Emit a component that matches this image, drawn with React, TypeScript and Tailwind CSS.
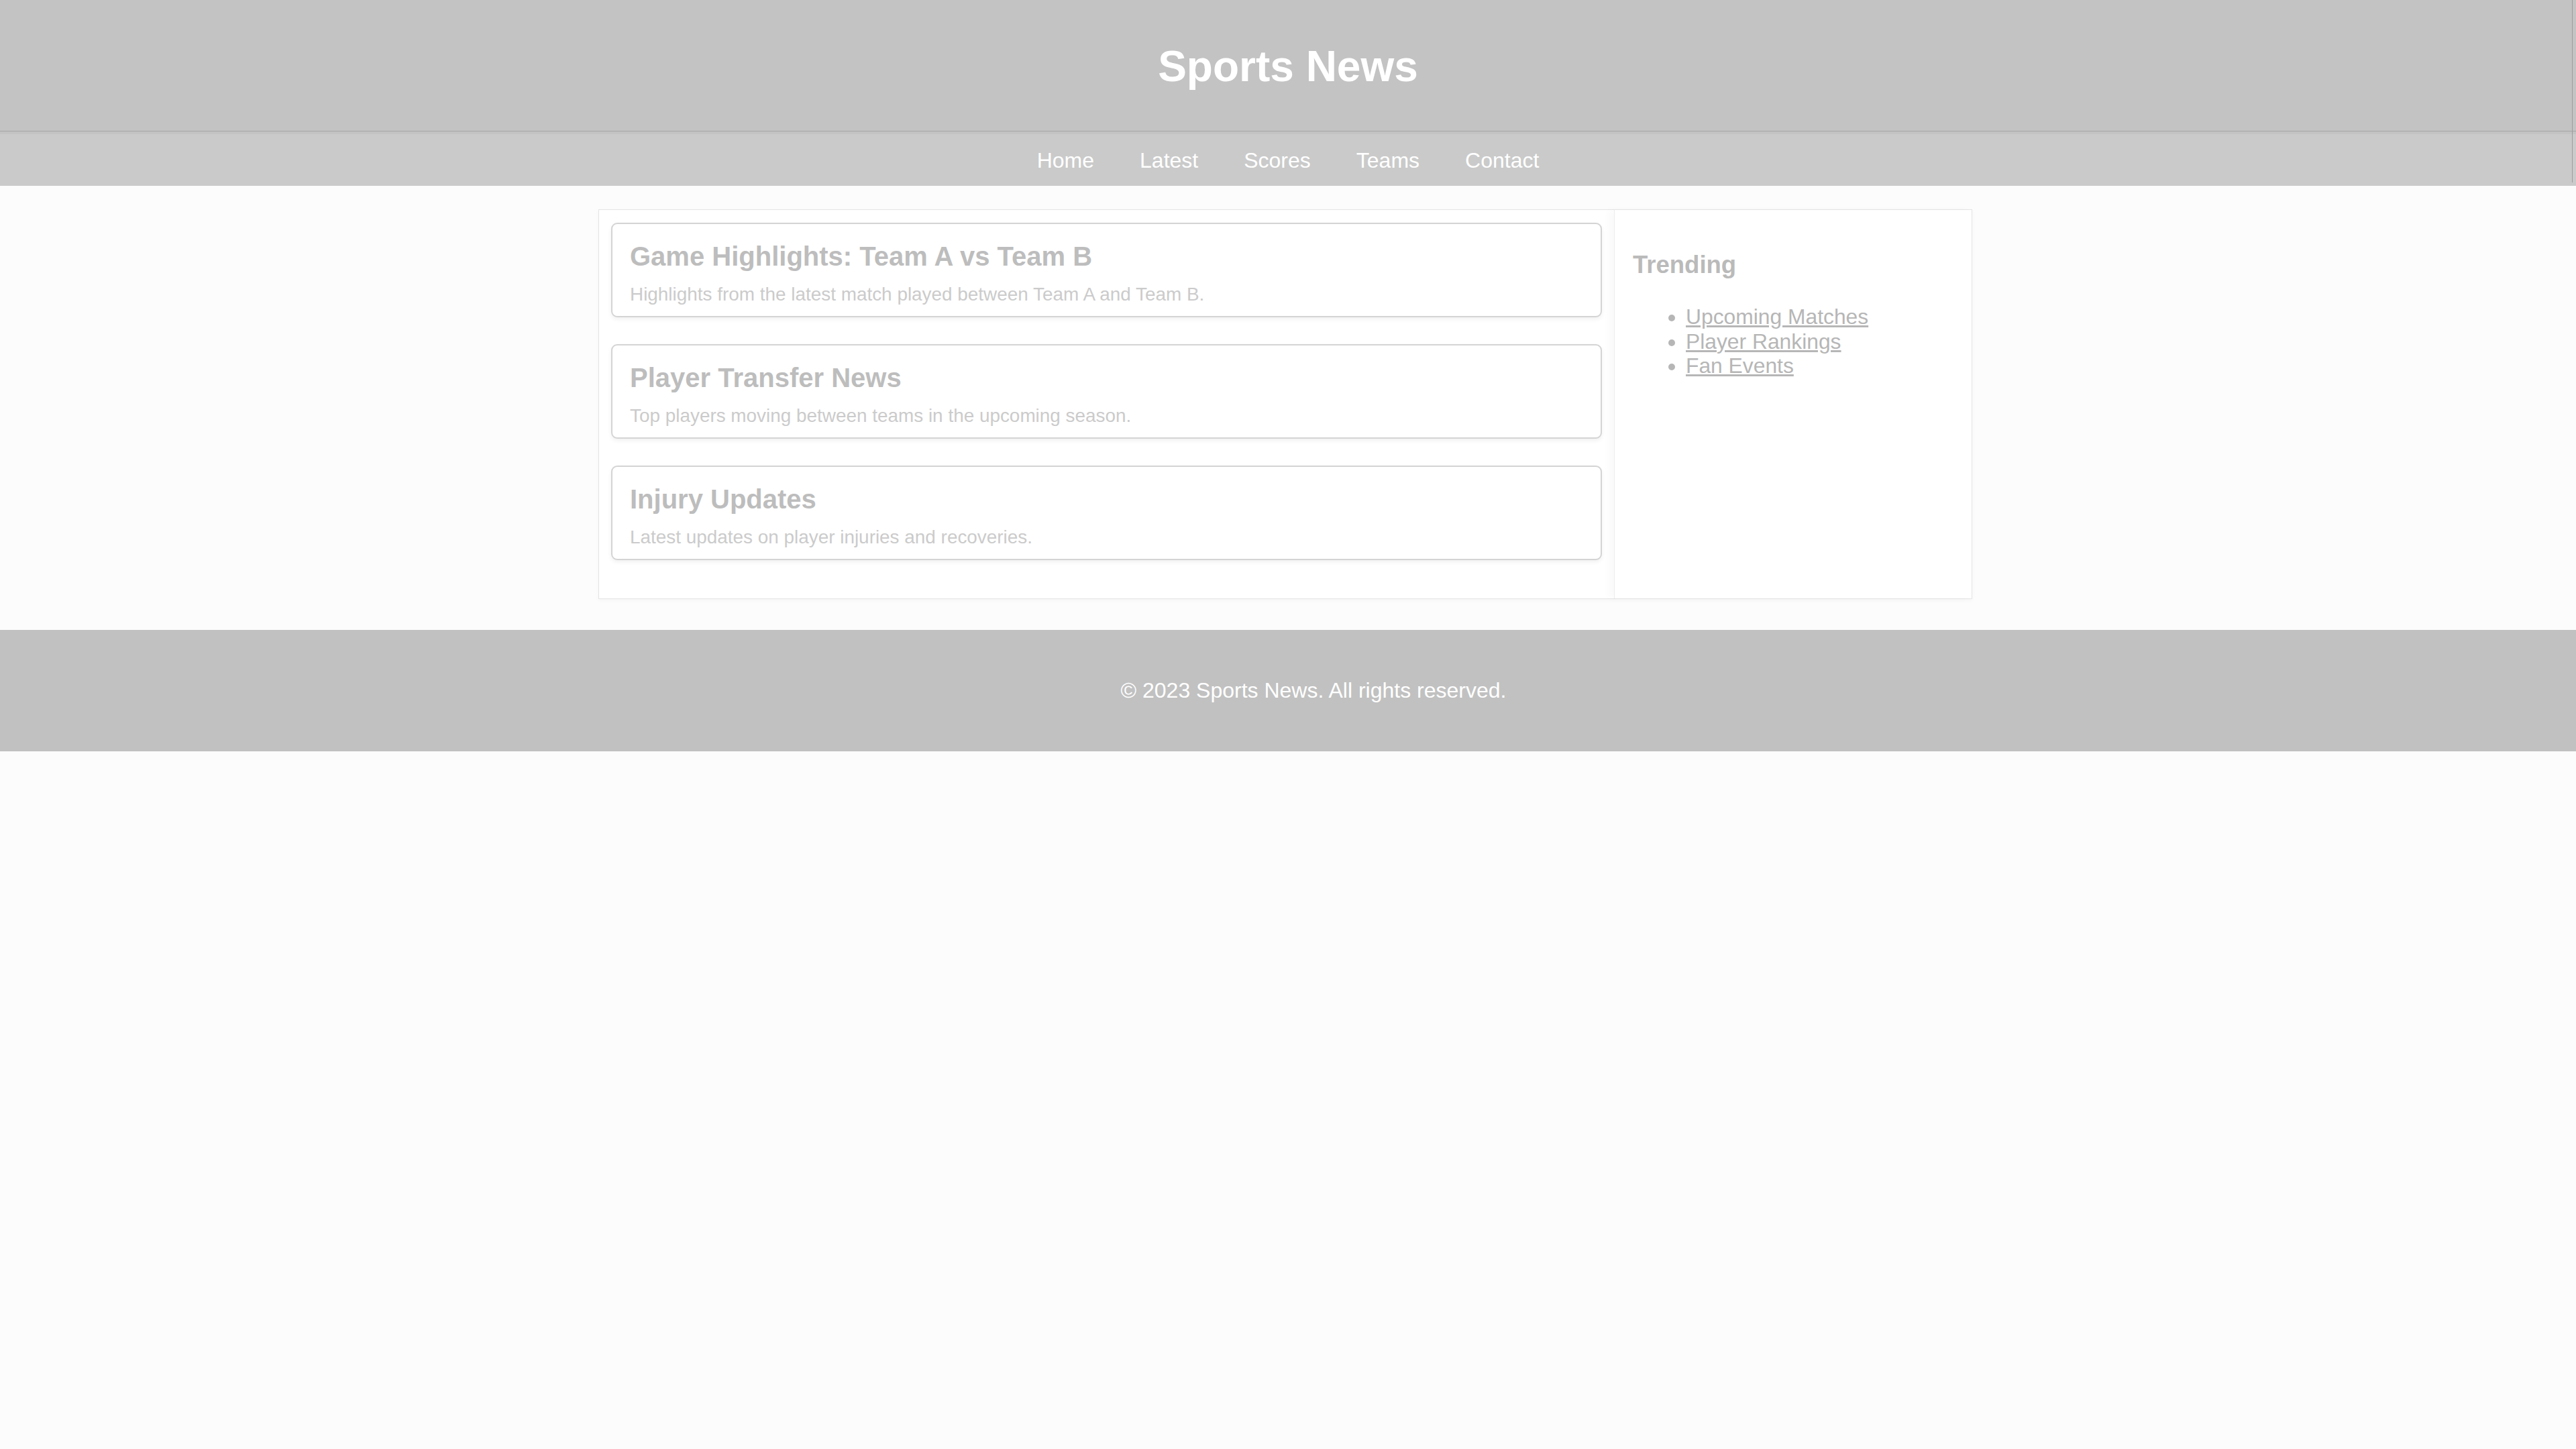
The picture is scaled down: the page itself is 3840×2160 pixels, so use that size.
import React from "react";

const articles = [
  {
    title: "Game Highlights: Team A vs Team B",
    desc: "Highlights from the latest match played between Team A and Team B.",
  },
  {
    title: "Player Transfer News",
    desc: "Top players moving between teams in the upcoming season.",
  },
  {
    title: "Injury Updates",
    desc: "Latest updates on player injuries and recoveries.",
  },
];

const navItems = ["Home", "Latest", "Scores", "Teams", "Contact"];
const trending = ["Upcoming Matches", "Player Rankings", "Fan Events"];

export default function App() {
  return (
    <div className="relative min-h-[2160px] w-full bg-[#fcfcfc] font-['Liberation_Sans',Arial,sans-serif]">
      {/* Header */}
      <header className="h-[200px] bg-[#c3c3c3]">
        <div className="flex h-[196px] items-center justify-center border-b border-[#a6a6a6] pt-[4px]">
          <h1 className="m-0 text-[64px] font-bold leading-[73px] text-white">Sports News</h1>
        </div>
      </header>

      {/* Nav */}
      <nav className="flex h-[77px] items-center justify-center gap-[68px] bg-[#cacaca]">
        {navItems.map((item) => (
          <a key={item} href="#" className="text-[32px] leading-[36px] text-white no-underline">
            {item}
          </a>
        ))}
      </nav>

      {/* Main container */}
      <div className="flex justify-center pr-[8px] pt-[35px]">
        <div className="flex w-[2048px] border border-[#e4e4e4] bg-white shadow-[0_2px_6px_rgba(0,0,0,0.03)]">
          <main className="w-[1513px] px-[18px] pt-[19px] pb-[17px]">
            {articles.map((a) => (
              <article
                key={a.title}
                className="mb-[40px] rounded-[9px] border-2 border-[#d4d4d4] bg-white px-[26px] pt-[25px] pb-[16px] shadow-[0_3px_6px_rgba(0,0,0,0.06)]"
              >
                <h2 className="m-0 text-[40px] font-bold leading-[46px] text-[#bdbdbd]">{a.title}</h2>
                <p className="mt-[18px] text-[27.9px] leading-[32px] text-[#cbcbcb]">{a.desc}</p>
              </article>
            ))}
          </main>
          <aside className="w-[533px] border-l border-[#ececec] px-[27px] pt-[61px] shadow-[-8px_0_10px_rgba(0,0,0,0.025)]">
            <h3 className="m-0 text-[36.5px] font-bold leading-[42px] text-[#bababa]">Trending</h3>
            <ul className="mt-[38px] list-disc pl-[79px] text-[31.8px] leading-[36.5px] text-[#b6b6b6]">
              {trending.map((t) => (
                <li key={t}>
                  <a href="#" className="text-[#b6b6b6] underline">
                    {t}
                  </a>
                </li>
              ))}
            </ul>
          </aside>
        </div>
      </div>

      {/* Footer */}
      <footer className="mt-[46px] flex h-[181px] items-center justify-center bg-[#c1c1c1] pl-[76px]">
        <p className="text-[32px] leading-[37px] text-white">© 2023 Sports News. All rights reserved.</p>
      </footer>

      {/* right edge line */}
      <div className="absolute right-[5px] top-0 h-[272px] w-px bg-[#9c9c9c]" />
    </div>
  );
}
